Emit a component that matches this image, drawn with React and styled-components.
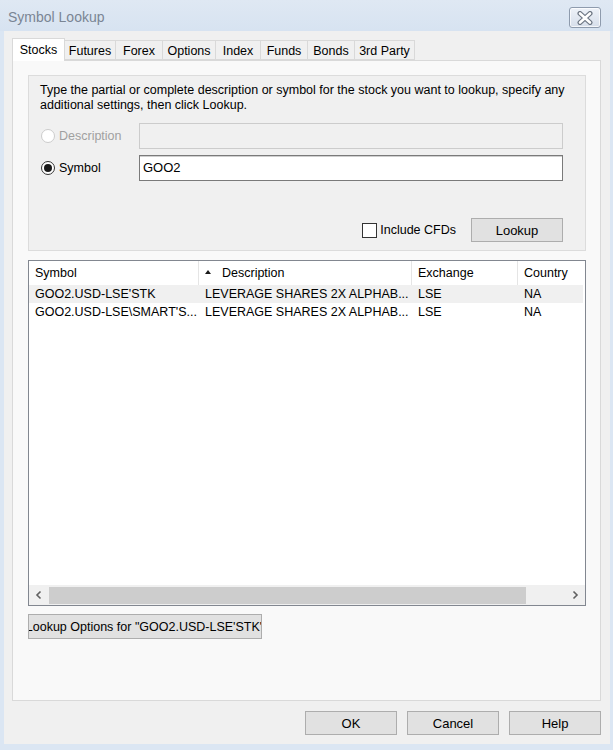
import React from "react";
import styled, { createGlobalStyle } from "styled-components";

const Global = createGlobalStyle`
  html, body { margin: 0; padding: 0; }
  body { font-family: "Liberation Sans", Arial, sans-serif; font-size: 12.5px; color: #000; }
  * { box-sizing: border-box; }
`;

const Window = styled.div`
  width: 613px;
  height: 750px;
  background: #dbe6f3;
  display: flex;
  flex-direction: column;
  overflow: hidden;
`;

const TitleBar = styled.div`
  height: 31px;
  display: flex;
  align-items: flex-start;
  justify-content: space-between;
  padding: 0 12px 0 8px;
  background: linear-gradient(#dfe8f3, #d7e3f1);
`;

const Title = styled.div`
  margin-top: 9px;
  font-size: 14px;
  color: #7a8594;
  font-family: "Liberation Sans", Arial, sans-serif;
`;

const CloseButton = styled.div`
  margin-top: 7px;
  width: 32px;
  height: 21px;
  border: 1px solid #8e9bad;
  border-radius: 3px;
  background: linear-gradient(#eef2f8, #d6deea);
  display: flex;
  align-items: center;
  justify-content: center;
  box-shadow: inset 0 0 0 1px rgba(255,255,255,0.7);
`;

const Client = styled.div`
  margin: 0 3px 6px 4px;
  flex: 1;
  background: #f0f0f0;
  display: flex;
  flex-direction: column;
  padding: 7px 9px 9px 8px;
`;

const TabStrip = styled.div`
  display: flex;
  align-items: flex-end;
  height: 22px;
  position: relative;
  z-index: 1;
`;

const Tab = styled.div`
  width: ${p => p.$w + 1}px;
  height: ${p => (p.$active ? "23px" : "20px")};
  margin-bottom: ${p => (p.$active ? "-1px" : "0")};
  border: 1px solid #d9d9d9;
  border-bottom: ${p => (p.$active ? "none" : "1px solid #d9d9d9")};
  margin-left: -1px;
  background: ${p => (p.$active ? "#ffffff" : "#f0f0f0")};
  display: flex;
  align-items: center;
  justify-content: center;
  padding-top: ${p => (p.$active ? "0" : "1px")};
  white-space: nowrap;
  &:first-child { margin-left: 0; }
`;

const TabPanel = styled.div`
  height: 641px;
  border: 1px solid #d9d9d9;
  background: #f9f9f9;
  padding: 14px 14px 0 15px;
  display: flex;
  flex-direction: column;
`;

const GroupBox = styled.div`
  height: 176px;
  border: 1px solid #dcdcdc;
  background: #f0f0f0;
  padding: 7px 22px 8px 11px;
  display: flex;
  flex-direction: column;
`;

const Intro = styled.div`
  line-height: 15px;
  margin-right: -12px;
`;

const FieldRow = styled.div`
  display: grid;
  grid-template-columns: 99px 424px;
  align-items: center;
  height: 26px;
  margin-top: ${p => p.$mt}px;
`;

const RadioLabel = styled.label`
  display: flex;
  align-items: center;
  gap: 4px;
  color: ${p => (p.$disabled ? "#a0a0a0" : "#000")};
  padding-left: 1px;
`;

const RadioCircle = styled.span`
  width: 14px;
  height: 14px;
  border-radius: 50%;
  border: 1px solid ${p => (p.$disabled ? "#cccccc" : "#333333")};
  background: #fff;
  display: flex;
  align-items: center;
  justify-content: center;
  &::after {
    content: "";
    display: ${p => (p.$checked ? "block" : "none")};
    width: 8px;
    height: 8px;
    border-radius: 50%;
    background: #1a1a1a;
  }
`;

const TextBox = styled.div`
  height: 26px;
  border: 1px solid ${p => (p.$disabled ? "#cccccc" : "#7a7a7a")};
  background: ${p => (p.$disabled ? "#f0f0f0" : "#ffffff")};
  padding: 4px 3px;
  font-size: 13px;
  box-shadow: ${p => (p.$disabled ? "none" : "inset 0 1px 0 #cfcfcf")};
`;

const ActionRow = styled.div`
  margin-top: auto;
  display: flex;
  justify-content: flex-end;
  align-items: center;
  gap: 15px;
`;

const CheckLabel = styled.label`
  display: flex;
  align-items: center;
  gap: 3px;
`;

const CheckBox = styled.span`
  width: 15px;
  height: 15px;
  border: 1px solid #333;
  background: #fff;
`;

const Button = styled.div`
  width: ${p => p.$w || 92}px;
  height: ${p => p.$h || 24}px;
  border: 1px solid #adadad;
  background: #e1e1e1;
  display: flex;
  align-items: center;
  justify-content: center;
  white-space: nowrap;
  overflow: hidden;
  font-size: 13px;
`;

const ListView = styled.div`
  margin-top: 9px;
  height: 346px;
  border: 1px solid #828790;
  background: #fff;
  display: flex;
  flex-direction: column;
  overflow: hidden;
`;

const ListRow = styled.div`
  display: grid;
  grid-template-columns: 170px 213px 106px 90px;
  height: ${p => (p.$header ? "24px" : "18px")};
  background: ${p => (p.$shade ? "#f0f0f0" : "#fff")};
  margin-right: ${p => (p.$header ? "0" : "2px")};
  flex-shrink: 0;
`;

const Cell = styled.div`
  display: flex;
  align-items: center;
  padding-left: 6px;
  white-space: nowrap;
  overflow: hidden;
  border-right: ${p => (p.$header ? "1px solid #e5e5e5" : "none")};
`;

const SortArrow = styled.span`
  width: 0;
  height: 0;
  border-left: 3.5px solid transparent;
  border-right: 3.5px solid transparent;
  border-bottom: 4px solid #1a1a1a;
  margin: -3px 11px 0 0;
`;

const ListBody = styled.div`
  flex: 1;
`;

const HScroll = styled.div`
  height: 20px;
  background: #f0f0f0;
  display: flex;
  align-items: center;
  flex-shrink: 0;
`;

const ScrollArrow = styled.div`
  width: 20px;
  height: 20px;
  display: flex;
  align-items: center;
  justify-content: center;
`;

const Thumb = styled.div`
  height: 17px;
  width: 477px;
  background: #cdcdcd;
`;

const Track = styled.div`
  flex: 1;
  display: flex;
  align-items: center;
`;

const OptionsButton = styled(Button)`
  margin-top: 8px;
  font-size: 12.5px;
`;

const OptionsText = styled.span`
  flex-shrink: 0;
`;

const Footer = styled.div`
  margin-top: 10px;
  display: flex;
  justify-content: flex-end;
  gap: 10px;
`;

const Chevron = ({ dir }) => (
  <svg width="8" height="10" viewBox="0 0 8 10">
    <path
      d={dir === "left" ? "M5.5 1.5 L2 5 L5.5 8.5" : "M2.5 1.5 L6 5 L2.5 8.5"}
      fill="none"
      stroke="#606060"
      strokeWidth="1.6"
    />
  </svg>
);

const tabs = [
  ["Stocks", 52],
  ["Futures", 51],
  ["Forex", 47],
  ["Options", 53],
  ["Index", 45],
  ["Funds", 47],
  ["Bonds", 47],
  ["3rd Party", 60],
];

const rows = [
  ["GOO2.USD-LSE'STK", "LEVERAGE SHARES 2X ALPHAB...", "LSE", "NA"],
  ["GOO2.USD-LSE\\SMART'S...", "LEVERAGE SHARES 2X ALPHAB...", "LSE", "NA"],
];

export default function App() {
  return (
    <>
      <Global />
      <Window>
        <TitleBar>
          <Title>Symbol Lookup</Title>
          <CloseButton>
            <svg width="18" height="14" viewBox="0 0 18 14">
              <path d="M4 2.5 L14 11.5 M14 2.5 L4 11.5" stroke="#6d7683" strokeWidth="5" strokeLinecap="round" />
              <path d="M4 2.5 L14 11.5 M14 2.5 L4 11.5" stroke="#ffffff" strokeWidth="2.6" strokeLinecap="round" />
            </svg>
          </CloseButton>
        </TitleBar>
        <Client>
          <TabStrip>
            {tabs.map(([t, w], i) => (
              <Tab key={t} $w={w} $active={i === 0}>{t}</Tab>
            ))}
          </TabStrip>
          <TabPanel>
            <GroupBox>
              <Intro>
                Type the partial or complete description or symbol for the stock you want to lookup, specify any additional settings, then click Lookup.
              </Intro>
              <FieldRow $mt={10}>
                <RadioLabel $disabled>
                  <RadioCircle $disabled />
                  Description
                </RadioLabel>
                <TextBox $disabled />
              </FieldRow>
              <FieldRow $mt={6}>
                <RadioLabel>
                  <RadioCircle $checked />
                  Symbol
                </RadioLabel>
                <TextBox>GOO2</TextBox>
              </FieldRow>
              <ActionRow>
                <CheckLabel>
                  <CheckBox />
                  Include CFDs
                </CheckLabel>
                <Button>Lookup</Button>
              </ActionRow>
            </GroupBox>
            <ListView>
              <ListRow $header>
                <Cell $header>Symbol</Cell>
                <Cell $header><SortArrow />Description</Cell>
                <Cell $header>Exchange</Cell>
                <Cell>Country</Cell>
              </ListRow>
              <ListBody>
                {rows.map((r, i) => (
                  <ListRow key={i} $shade={i === 0}>
                    {r.map((c, j) => (
                      <Cell key={j}>{c}</Cell>
                    ))}
                  </ListRow>
                ))}
              </ListBody>
              <HScroll>
                <ScrollArrow><Chevron dir="left" /></ScrollArrow>
                <Track><Thumb /></Track>
                <ScrollArrow><Chevron dir="right" /></ScrollArrow>
              </HScroll>
            </ListView>
            <OptionsButton $w={234} $h={25}>
              <OptionsText>Lookup Options for "GOO2.USD-LSE'STK"</OptionsText>
            </OptionsButton>
          </TabPanel>
          <Footer>
            <Button>OK</Button>
            <Button>Cancel</Button>
            <Button>Help</Button>
          </Footer>
        </Client>
      </Window>
    </>
  );
}
